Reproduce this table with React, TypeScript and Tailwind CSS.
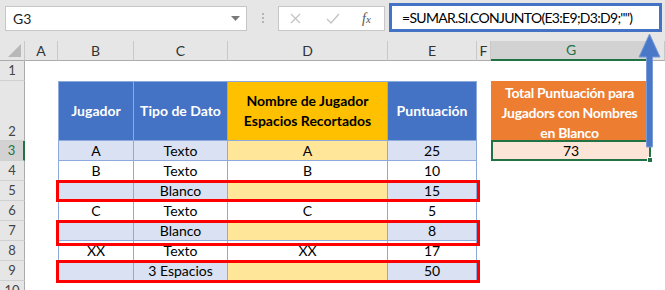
import React from 'react';

type Row = { n: number; b: string; c: string; d: string; e: string; band: boolean };

const rows: Row[] = [
  { n: 3, b: 'A', c: 'Texto', d: 'A', e: '25', band: true },
  { n: 4, b: 'B', c: 'Texto', d: 'B', e: '10', band: false },
  { n: 5, b: '', c: 'Blanco', d: '', e: '15', band: true },
  { n: 6, b: 'C', c: 'Texto', d: 'C', e: '5', band: false },
  { n: 7, b: '', c: 'Blanco', d: '', e: '8', band: true },
  { n: 8, b: 'XX', c: 'Texto', d: 'XX', e: '17', band: false },
  { n: 9, b: '', c: '3 Espacios', d: '', e: '50', band: true },
];

const letters = ['A', 'B', 'C', 'D', 'E', 'F', 'G', ''];

function RowHead({ n, selected, bottom }: { n: number; selected?: boolean; bottom?: boolean }) {
  return (
    <div
      className={`flex justify-center ${bottom ? 'items-end pb-[2px]' : 'items-center'} border-b border-[#d0d0d0] border-r ${
        selected ? 'bg-[#d2d2d2] text-[#217346] border-r-2 border-r-[#217346]' : 'bg-[#e6e6e6] text-[#444] border-r-[#ababab]'
      } text-[13px] leading-none`}
    >
      {n}
    </div>
  );
}

export default function App() {
  const cell = 'flex items-center justify-center border-r border-b border-[#8ea9db] text-[14px] leading-none text-black';

  return (
    <div className="relative w-[665px] h-[290px] overflow-hidden bg-white font-[Lato,'Liberation_Sans',sans-serif]">
      {/* formula bar */}
      <div className="h-[41px] bg-[#e6e6e6] flex items-start">
        <div className="mt-[6px] ml-[5px] w-[242px] h-[25px] bg-white border border-[#c6c6c6] flex items-center justify-between pl-[7px] pr-[6px] text-[14px] text-[#222]">
          <span>G3</span>
          <svg width="9" height="5" viewBox="0 0 9 5">
            <path d="M0 0h9L4.5 5z" fill="#7a7a7a" />
          </svg>
        </div>
        <div className="mt-[13px] ml-[15px] w-[2px] flex flex-col gap-[2px]">
          <span className="block w-[2px] h-[2px] bg-[#b5b5b5]" />
          <span className="block w-[2px] h-[2px] bg-[#b5b5b5]" />
          <span className="block w-[2px] h-[2px] bg-[#b5b5b5]" />
        </div>
        <div className="mt-[6px] ml-[14px] w-[107px] h-[25px] bg-white border border-[#c6c6c6] flex items-center">
          <svg className="ml-[11px]" width="11" height="11" viewBox="0 0 11 11">
            <path d="M1 1l9 9M10 1l-9 9" stroke="#c4c4c4" strokeWidth="1.3" />
          </svg>
          <svg className="ml-[25px]" width="14" height="11" viewBox="0 0 14 11">
            <path d="M1 6l4 4 8-9" stroke="#c4c4c4" strokeWidth="1.4" fill="none" />
          </svg>
          <span className="ml-[22px] text-[14px] italic text-[#555] font-['Liberation_Serif',serif] leading-none">
            f<span className="text-[11px]">x</span>
          </span>
        </div>
        <div className="mt-[3px] ml-[4px] w-[273px] h-[29px] bg-white border-[3px] border-[#4472c4] flex items-center pl-[10px] text-[14px] text-black tracking-[-0.7px] whitespace-nowrap overflow-hidden">
          =SUMAR.SI.CONJUNTO(E3:E9;D3:D9;"")
        </div>
      </div>

      {/* sheet */}
      <div className="grid grid-cols-[25px_33px_76px_94px_160px_89px_14px_161px_1fr] grid-rows-[20px_20px_60px_20px_20px_20px_20px_20px_20px_20px_20px]">
        {/* column headers */}
        <div className="bg-[#e6e6e6] border-r border-b border-r-[#c8c8c8] border-b-[#ababab] flex items-end justify-end pr-[3px] pb-[3px]">
          <svg width="13" height="13" viewBox="0 0 13 13">
            <path d="M13 0V13H0z" fill="#b8b8b8" />
          </svg>
        </div>
        {letters.map((l, i) =>
          l === 'G' ? (
            <div key={i} className="bg-[#d2d2d2] border-r border-r-[#c8c8c8] border-b-2 border-b-[#217346] flex items-center justify-center text-[14px] leading-none text-[#217346]">
              {l}
            </div>
          ) : (
            <div key={i} className="bg-[#e6e6e6] border-r border-r-[#c8c8c8] border-b border-b-[#ababab] flex items-center justify-center text-[14px] leading-none text-[#333]">
              {l}
            </div>
          )
        )}

        {/* row 1 */}
        <RowHead n={1} />
        <div className="col-span-8" />

        {/* row 2 */}
        <RowHead n={2} bottom />
        <div />
        <div className={`${cell} border-l border-t bg-[#4472c4] text-white font-bold`}>Jugador</div>
        <div className={`${cell} border-t bg-[#4472c4] text-white font-bold`}>Tipo de Dato</div>
        <div className={`${cell} border-t bg-[#ffc000] font-bold flex-col !leading-[20px]`}>
          <span>Nombre de Jugador</span>
          <span>Espacios Recortados</span>
        </div>
        <div className={`${cell} border-t bg-[#4472c4] text-white font-bold`}>Puntuación</div>
        <div />
        <div className="bg-[#ed7d31] mr-[4px] text-white font-bold text-[14px] leading-[20px] tracking-[-0.3px] flex flex-col items-center justify-center pt-[3px]">
          <span>Total Puntuación para</span>
          <span>Jugadors con Nombres</span>
          <span>en Blanco</span>
        </div>
        <div />

        {/* data rows */}
        {rows.map((r) => (
          <React.Fragment key={r.n}>
            <RowHead n={r.n} selected={r.n === 3} />
            <div />
            <div className={`${cell} border-l pt-[1px] ${r.band ? 'bg-[#d9e1f2]' : 'bg-white'}`}>{r.b}</div>
            <div className={`${cell} pt-[1px] ${r.band ? 'bg-[#d9e1f2]' : 'bg-white'}`}>{r.c}</div>
            <div className={`${cell} pt-[1px] ${r.band ? 'bg-[#ffe699]' : 'bg-white'}`}>{r.d}</div>
            <div className={`${cell} pt-[1px] ${r.band ? 'bg-[#d9e1f2]' : 'bg-white'}`}>{r.e}</div>
            <div />
            {r.n === 3 ? (
              <div className="relative bg-[#fce4d6] border-2 border-[#217346] mr-[1px] -mt-[1px] h-[21px] flex items-center justify-center text-[14px] leading-none text-black">
                73
                <span className="absolute -right-[4px] -bottom-[4px] w-[6px] h-[6px] bg-[#217346] border border-white" />
              </div>
            ) : (
              <div />
            )}
            <div />
          </React.Fragment>
        ))}

        {/* row 10 */}
        <RowHead n={10} />
        <div className="col-span-8" />
      </div>

      {/* red highlight boxes */}
      <div className="absolute left-[56px] top-[180px] w-[424px] h-[22px] border-[3px] border-[#ff0000]" />
      <div className="absolute left-[56px] top-[220px] w-[424px] h-[26px] border-[3px] border-[#ff0000]" />
      <div className="absolute left-[56px] top-[260px] w-[424px] h-[23px] border-[3px] border-[#ff0000]" />

      {/* arrow */}
      <svg className="absolute left-[637px] top-[33px]" width="26" height="116" viewBox="0 0 26 116">
        <path d="M12.5 1L23 24H15.5V114H9.5V24H2z" fill="#4a78c8" stroke="#7a9bd6" strokeWidth="1" />
      </svg>
    </div>
  );
}
